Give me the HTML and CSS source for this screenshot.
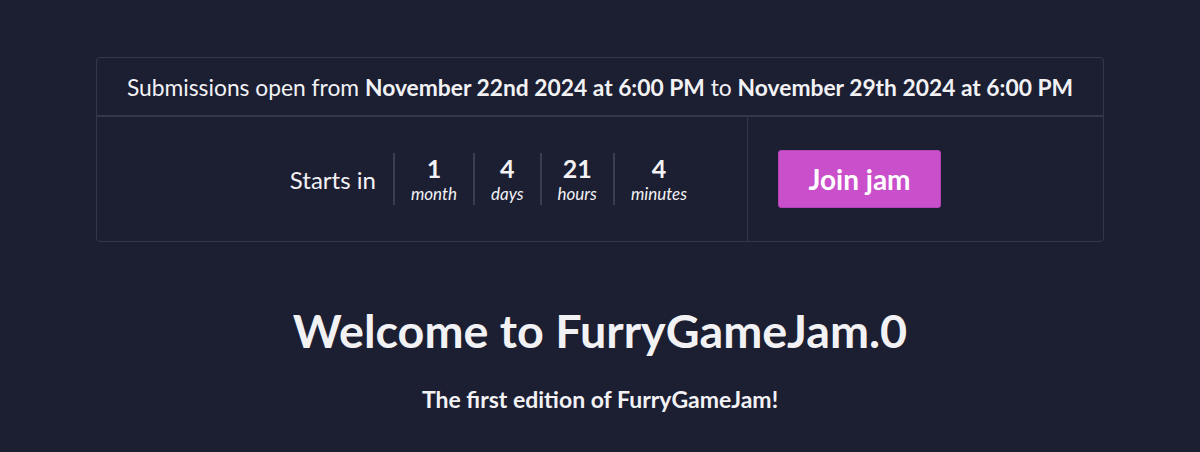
FILE: index.html
```html
<!DOCTYPE html>
<html lang="en">
<head>
<meta charset="UTF-8">
<meta name="viewport" content="width=device-width, initial-scale=1.0">
<title>FurryGameJam.0</title>
<link rel="stylesheet" href="styles.css">
</head>
<body>
<div class="jam-box">
  <div class="jam-dates">
    Submissions open from <strong>November 22nd 2024 at 6:00 PM</strong> to <strong>November 29th 2024 at 6:00 PM</strong>
  </div>
  <div class="jam-row">
    <div class="countdown-cell">
      <span class="starts-label">Starts in</span>
      <div class="countdown">
        <div class="unit"><span class="num">1</span><span class="label">month</span></div>
        <div class="unit"><span class="num">4</span><span class="label">days</span></div>
        <div class="unit"><span class="num">21</span><span class="label">hours</span></div>
        <div class="unit"><span class="num">4</span><span class="label">minutes</span></div>
      </div>
    </div>
    <div class="join-cell">
      <a href="#" class="join-btn">Join jam</a>
    </div>
  </div>
</div>

<div class="intro">
  <h1>Welcome to FurryGameJam.0</h1>
  <p>The first edition of FurryGameJam!</p>
</div>
</body>
</html>
```
FILE: styles.css
```css
body {
  font-family: Lato, "Open Sans", sans-serif;
  background-color: #1c1e32;
  color: #f2f2f5;
  margin: 0;
  padding: 57px 0 0;
}

.jam-box {
  width: 1006px;
  margin: 0 auto;
  border: 1px solid #34374b;
  border-radius: 4px;
}

.jam-dates {
  text-align: center;
  font-size: 22.8px;
  line-height: 26px;
  padding: 16px 0 15px;
  border-bottom: 2px solid #34374b;
}

.jam-dates strong {
  font-weight: 700;
}

.jam-row {
  display: flex;
  height: 124px;
}

.countdown-cell {
  width: 651px;
  display: flex;
  align-items: center;
  justify-content: flex-end;
  padding-right: 60px;
  box-sizing: border-box;
  border-right: 1px solid #34374b;
}

.starts-label {
  font-size: 24px;
  margin-right: 17px;
}

.countdown {
  display: flex;
}

.unit {
  display: flex;
  flex-direction: column;
  align-items: center;
  padding: 0 16px;
  border-left: 2px solid #3a3d51;
}

.unit:last-child {
  padding-right: 0;
}

.num {
  font-size: 25px;
  font-weight: 700;
  line-height: 30px;
}

.label {
  font-size: 17px;
  font-style: italic;
  line-height: 22px;
}

.join-cell {
  display: flex;
  align-items: center;
  padding-left: 30px;
}

.join-btn {
  display: inline-block;
  width: 163px;
  height: 58px;
  line-height: 56px;
  text-align: center;
  background-color: #c94fcb;
  border: 1px solid #b443b6;
  box-sizing: border-box;
  border-radius: 3px;
  color: #fff;
  font-size: 28px;
  font-weight: 700;
  text-decoration: none;
}

.intro {
  text-align: center;
}

.intro h1 {
  font-size: 46.7px;
  font-weight: 700;
  margin: 59px 0 0;
  line-height: 58px;
}

.intro p {
  font-size: 23px;
  font-weight: 700;
  margin: 26px 0 0;
}
```
